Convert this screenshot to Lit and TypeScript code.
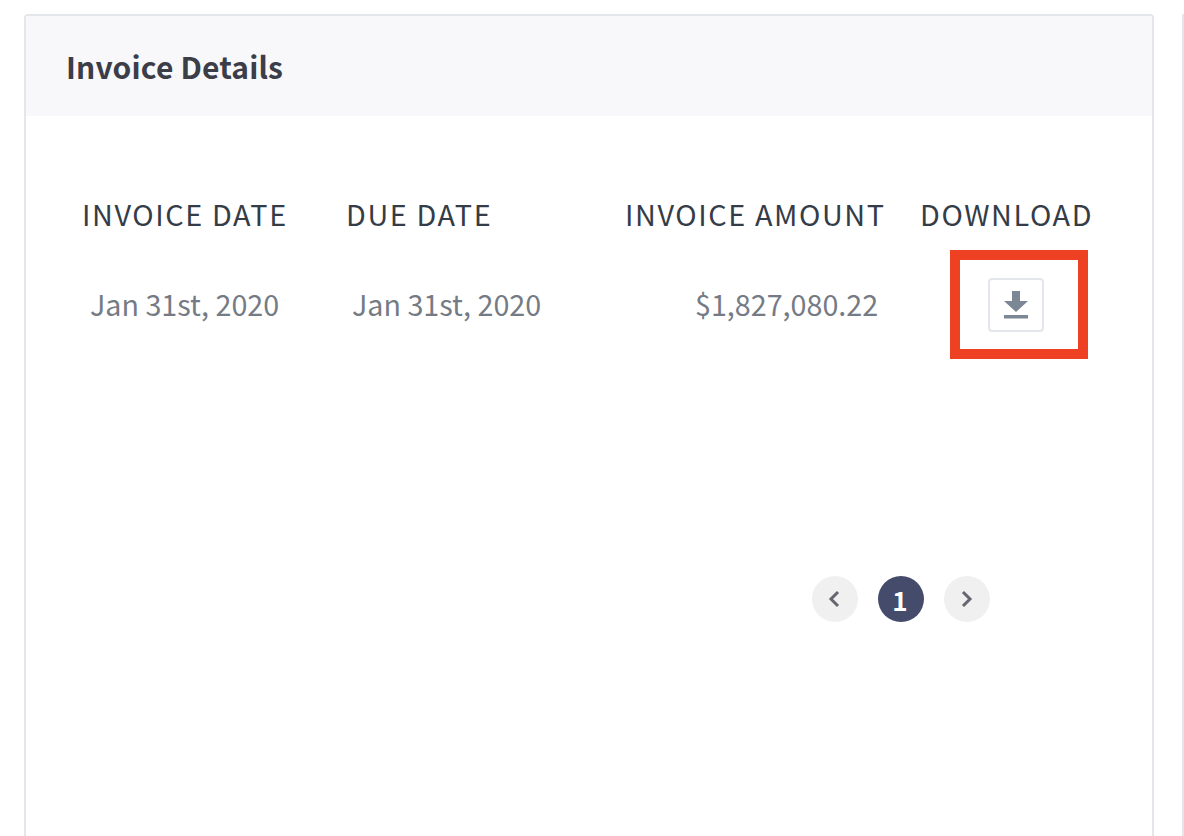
import { LitElement, html, css } from "lit";
import { customElement } from "lit/decorators.js";

@customElement("app-root")
export class AppRoot extends LitElement {
  static styles = css`
    :host {
      display: block;
      width: 1184px;
      height: 836px;
      overflow: hidden;
      background: #fff;
      font-family: "Noto Sans CJK SC", "Noto Sans", sans-serif;
    }
    .page {
      display: flex;
      gap: 28px;
      padding: 14px 0 0 24px;
      height: 100%;
      box-sizing: border-box;
    }
    .card {
      flex: 0 0 1130px;
      height: 900px;
      box-sizing: border-box;
      border: 2px solid #e3e7eb;
      border-radius: 4px;
    }
    .next {
      flex: 0 0 100px;
      height: 900px;
      border-left: 2px solid #e3e7eb;
    }
    .head {
      height: 100px;
      background: #f8f8fa;
      display: flex;
      align-items: center;
      padding-left: 40px;
      font-size: 30px;
      letter-spacing: 0.15px;
      font-weight: 700;
      color: #3b3d49;
    }
    .grid {
      display: grid;
      grid-template-columns: 264px 279px 295px 1fr;
      padding: 77px 0 0 56px;
    }
    .th {
      font-size: 28.8px;
      letter-spacing: 1.6px;
      line-height: 42px;
      color: #343c47;
      white-space: nowrap;
    }
    .td {
      font-size: 28.7px;
      line-height: 42px;
      color: #757b84;
      white-space: nowrap;
      align-self: center;
      padding-top: 14px;
    }
    .d1 { padding-left: 8px; }
    .d2 { padding-left: 6px; }
    .d3 { padding-left: 70px; }
    .box {
      width: 138px;
      height: 109px;
      box-sizing: border-box;
      border: 10px solid #ee4123;
      margin: 15px 0 0 30px;
      display: flex;
      align-items: center;
      justify-content: center;
      padding-right: 7px;
    }
    .btn {
      width: 56px;
      height: 54px;
      box-sizing: border-box;
      border: 2px solid #e3e7eb;
      border-radius: 4px;
      background: #fff;
      padding: 0;
      display: flex;
      align-items: center;
      justify-content: center;
    }
    .pager {
      display: flex;
      gap: 20px;
      padding: 217px 0 0 786px;
    }
    .pg {
      width: 46px;
      height: 46px;
      border-radius: 50%;
      background: #f0f0f0;
      display: flex;
      align-items: center;
      justify-content: center;
    }
    .prev {
      padding-right: 2px;
      box-sizing: border-box;
    }
    .cur {
      background: #444b6b;
      color: #fff;
      font-size: 26px;
      font-weight: 700;
      padding-right: 2px;
      box-sizing: border-box;
    }
  `;

  render() {
    return html`
      <div class="page">
        <div class="card">
          <div class="head">Invoice Details</div>
          <div class="grid">
            <div class="th">INVOICE DATE</div>
            <div class="th">DUE DATE</div>
            <div class="th">INVOICE AMOUNT</div>
            <div class="th">DOWNLOAD</div>
            <div class="td d1">Jan 31st, 2020</div>
            <div class="td d2">Jan 31st, 2020</div>
            <div class="td d3">$1,827,080.22</div>
            <div class="box">
              <button class="btn" aria-label="Download">
                <svg width="26" height="30" viewBox="0 0 26 30">
                  <path d="M9 1h8v10h8L13 22 1 11h8z" fill="#7b8794" />
                  <rect x="1" y="25" width="24" height="3.5" fill="#7b8794" />
                </svg>
              </button>
            </div>
          </div>
          <div class="pager">
            <div class="pg prev">
              <svg width="14" height="20" viewBox="0 0 14 20">
                <path d="M11 3 4 10l7 7" fill="none" stroke="#666670" stroke-width="3" />
              </svg>
            </div>
            <div class="pg cur">1</div>
            <div class="pg">
              <svg width="14" height="20" viewBox="0 0 14 20">
                <path d="M3 3l7 7-7 7" fill="none" stroke="#666670" stroke-width="3" />
              </svg>
            </div>
          </div>
        </div>
        <div class="next"></div>
      </div>
    `;
  }
}
